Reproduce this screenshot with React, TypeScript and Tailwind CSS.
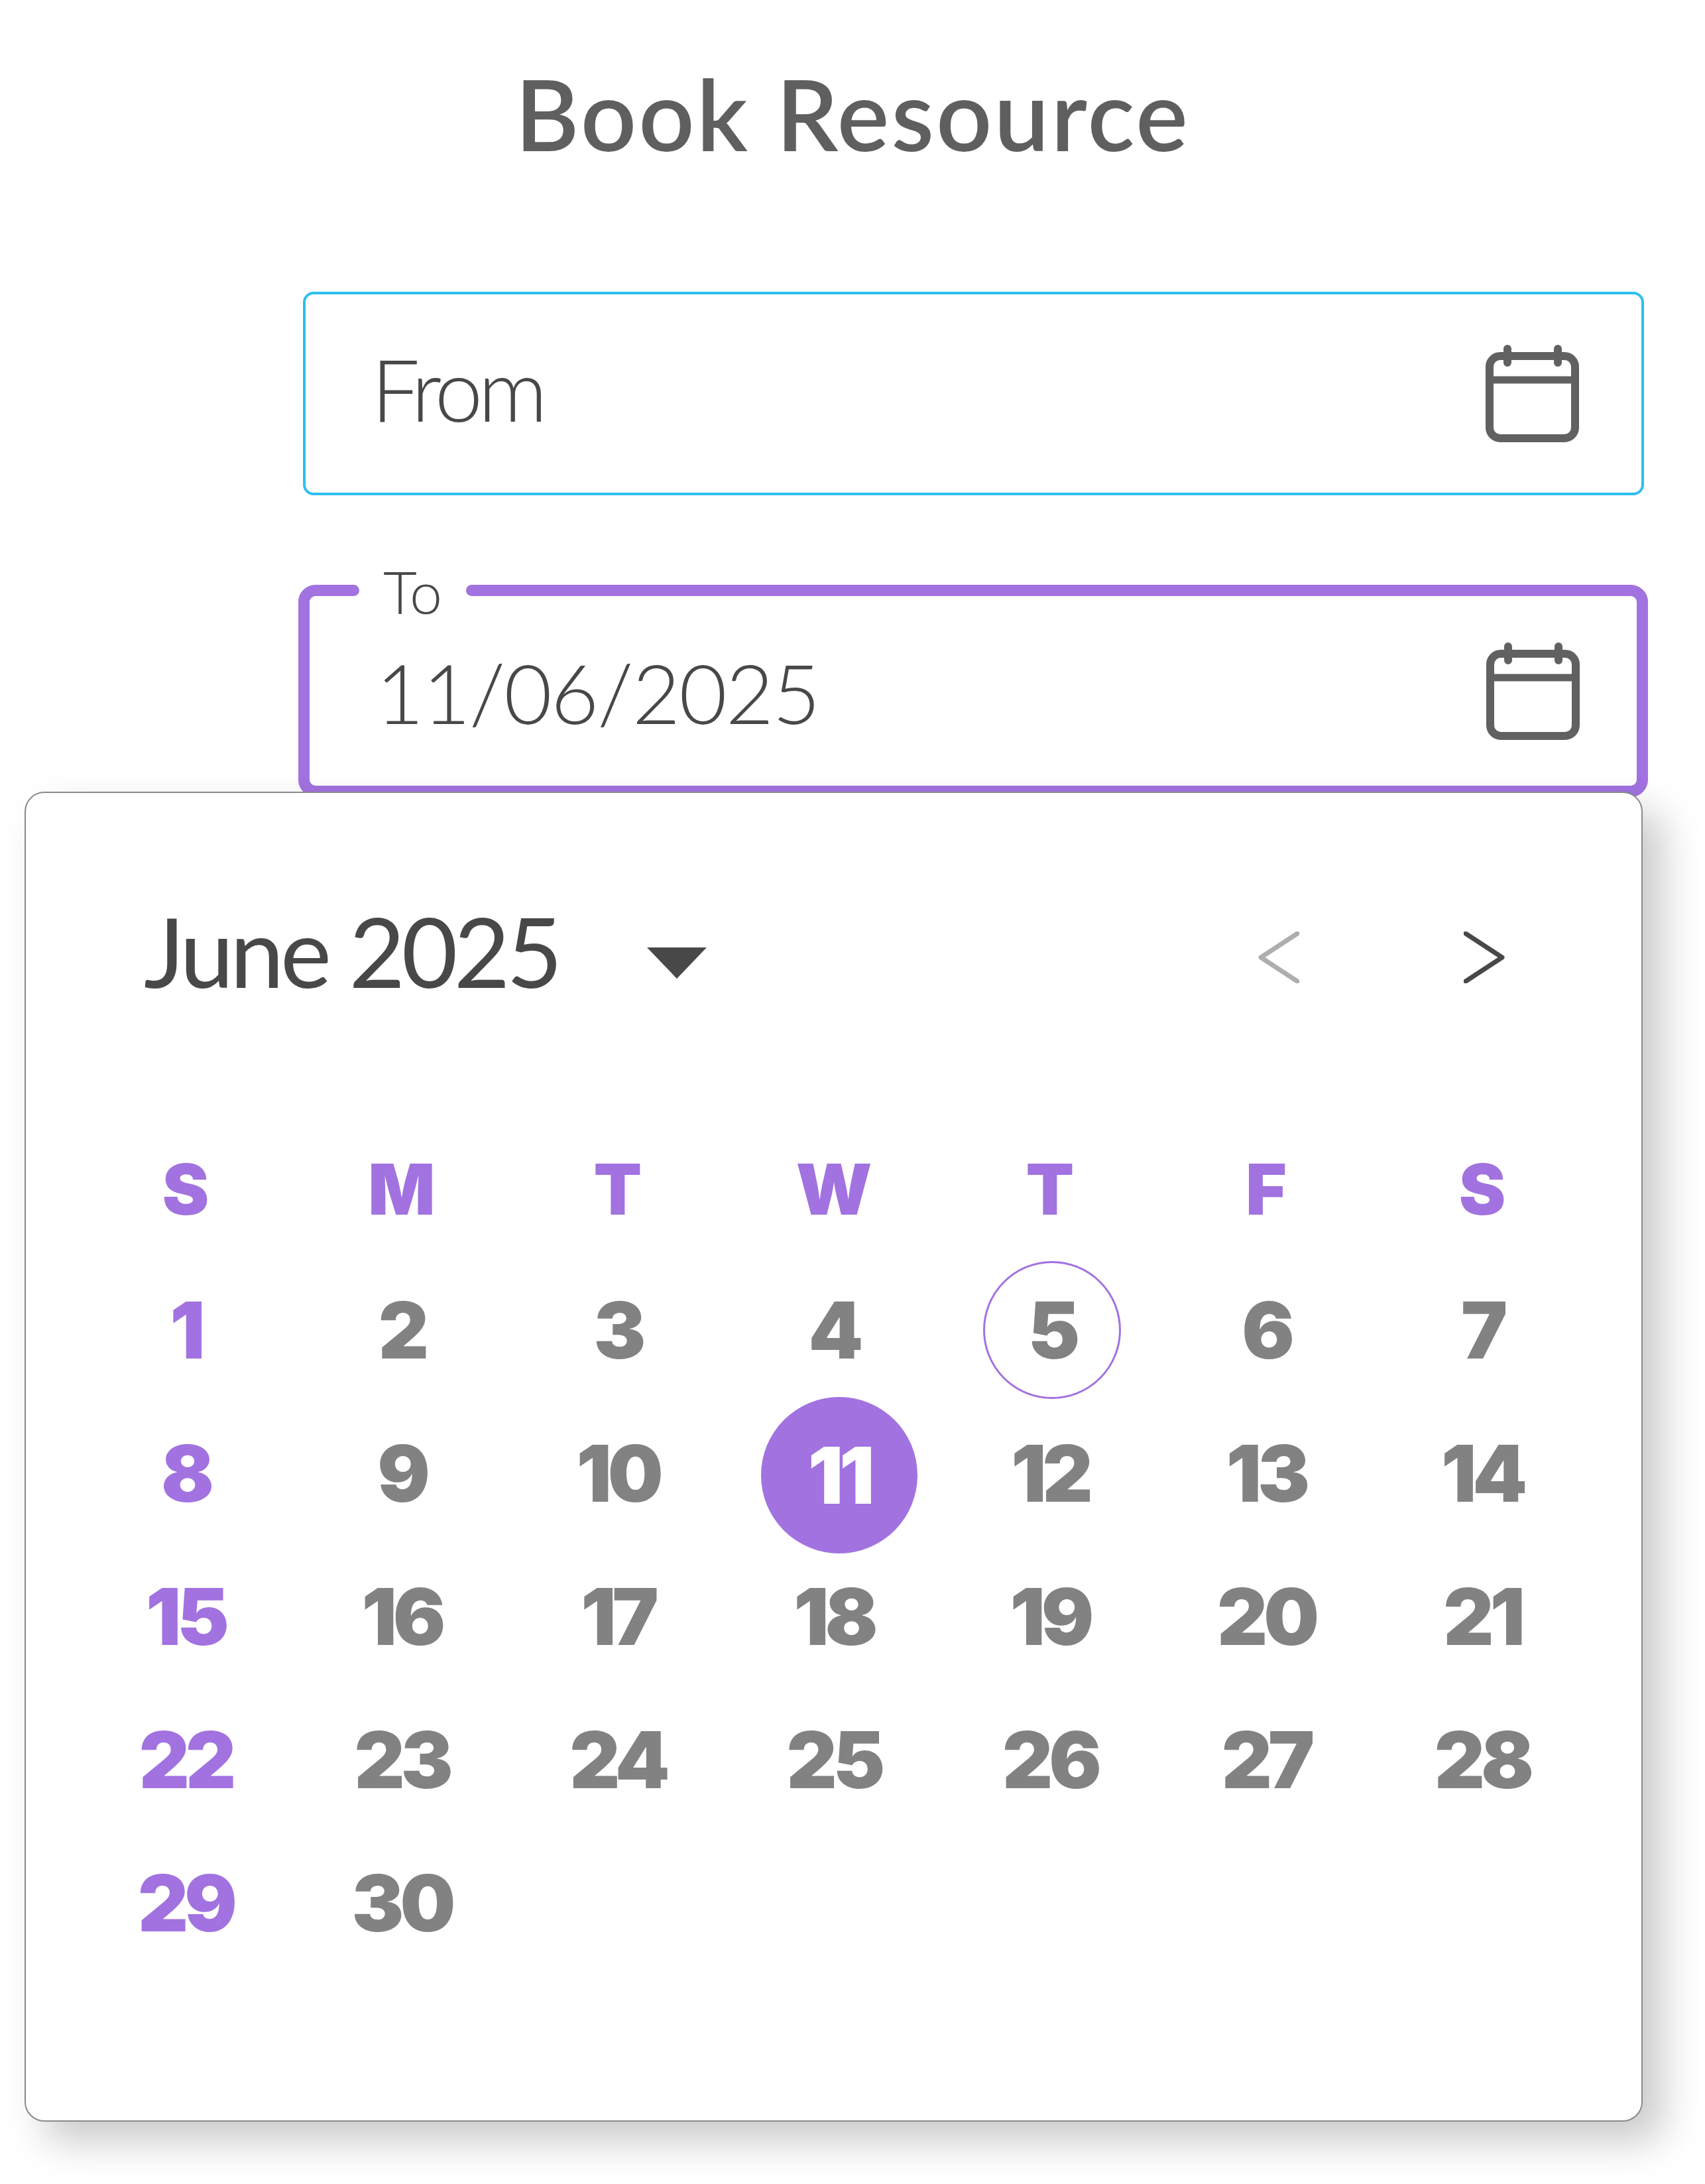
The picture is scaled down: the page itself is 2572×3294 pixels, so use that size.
const days = Array.from({ length: 30 }, (_, i) => i + 1);
const weekdays = ["S", "M", "T", "W", "T", "F", "S"];

const CalendarIcon = () => (
  <svg viewBox="0 0 141 147" fill="none" className="w-[141px] h-[147px] shrink-0" stroke="#616161">
    <rect x="6" y="17" width="129" height="124" rx="16" strokeWidth="12" />
    <path d="M6 53H135" strokeWidth="11" />
    <path d="M33 6V27M109 6V27" strokeWidth="12" strokeLinecap="round" />
  </svg>
);

const DayCell = ({ day }: { day: number }) => {
  const isSunday = day % 7 === 1;
  if (day === 11) {
    return (
      <div className="flex items-center justify-center">
        <div className="ml-[16px] mt-[6px] w-[236px] h-[236px] shrink-0 rounded-full bg-[#a272e0] text-white flex items-center justify-center">
          {day}
        </div>
      </div>
    );
  }
  if (day === 5) {
    return (
      <div className="flex items-center justify-center">
        <div className="ml-[6px] w-[208px] h-[208px] shrink-0 rounded-full border-[3px] border-[#a272e0] text-[#828282] flex items-center justify-center">
          {day}
        </div>
      </div>
    );
  }
  return (
    <div className={`flex items-center justify-center ${isSunday ? "text-[#a272e0]" : "text-[#828282]"}`}>
      {day}
    </div>
  );
};

export default function App() {
  return (
    <div className="w-[2572px] h-[3294px] bg-white overflow-hidden font-['Lato',sans-serif]">
      <h1 className="h-[342px] mb-[98px] flex items-center justify-center text-[148px] leading-none font-semibold tracking-[3px] text-[#5f5f5f]">
        Book Resource
      </h1>

      <div className="ml-[457px] w-[2023px] h-[307px] border-[4px] border-[#2dbfef] rounded-[16px] bg-white flex items-center justify-between pl-[99px] pr-[94px] mb-[135px]">
        <span className="mb-[16px] text-[130px] leading-none font-light tracking-[-7px] text-[#484848]">From</span>
        <CalendarIcon />
      </div>

      <div className="relative ml-[450px] w-[2036px] h-[320px] border-[17px] border-[#a272e0] rounded-[26px] bg-white flex items-center justify-between pl-[100px] pr-[86px]">
        <span className="absolute left-[66px] -top-[42px] w-[179px] h-[70px] bg-white flex items-center justify-center text-[88px] leading-none font-light text-[#484848]">
          To
        </span>
        <span className="absolute left-[58px] -top-[17px] w-[17px] h-[17px] rounded-full bg-[#a272e0]" />
        <span className="absolute left-[236px] -top-[17px] w-[17px] h-[17px] rounded-full bg-[#a272e0]" />
        <span className="mt-[4px] text-[125px] leading-none font-light tracking-[-2px] text-[#484848]">11/06/2025</span>
        <CalendarIcon />
      </div>

      <div className="relative z-10 -mt-[8px] ml-[37px] w-[2441px] h-[2006px] bg-white border-2 border-[#8a8a8a] rounded-[30px] shadow-[30px_30px_60px_rgba(0,0,0,0.21)]">
        <div className="h-[120px] mt-[186px] pl-[178px] pr-[205px] flex items-center">
          <span className="mb-[16px] text-[146px] leading-none tracking-[-5.5px] text-[#484848]">June 2025</span>
          <svg viewBox="0 0 90 47" className="mt-[20px] ml-[133px] w-[90px] h-[47px]">
            <path d="M0 0H90L45 47Z" fill="#484848" />
          </svg>
          <svg viewBox="0 0 63 78" fill="none" className="mt-[4px] ml-auto w-[63px] h-[78px]">
            <path d="M60 3L5 39L60 75" stroke="#aeaeae" strokeWidth="7" strokeLinecap="round" strokeLinejoin="round" />
          </svg>
          <svg viewBox="0 0 63 78" fill="none" className="mt-[4px] ml-[248px] w-[63px] h-[78px]">
            <path d="M3 3L58 39L3 75" stroke="#484848" strokeWidth="7" strokeLinecap="round" strokeLinejoin="round" />
          </svg>
        </div>

        <div className="mt-[180px] ml-[78px] w-[2282px] grid grid-cols-7 auto-rows-[216px] text-[118px] leading-none font-black tracking-[-6px] font-['Inter',sans-serif]">
          {weekdays.map((d, i) => (
            <div key={i} className="flex items-center justify-center pt-[8px] text-[106px] tracking-normal text-[#a272e0]">
              {d}
            </div>
          ))}
          {days.map((d) => (
            <DayCell key={d} day={d} />
          ))}
        </div>
      </div>
    </div>
  );
}
